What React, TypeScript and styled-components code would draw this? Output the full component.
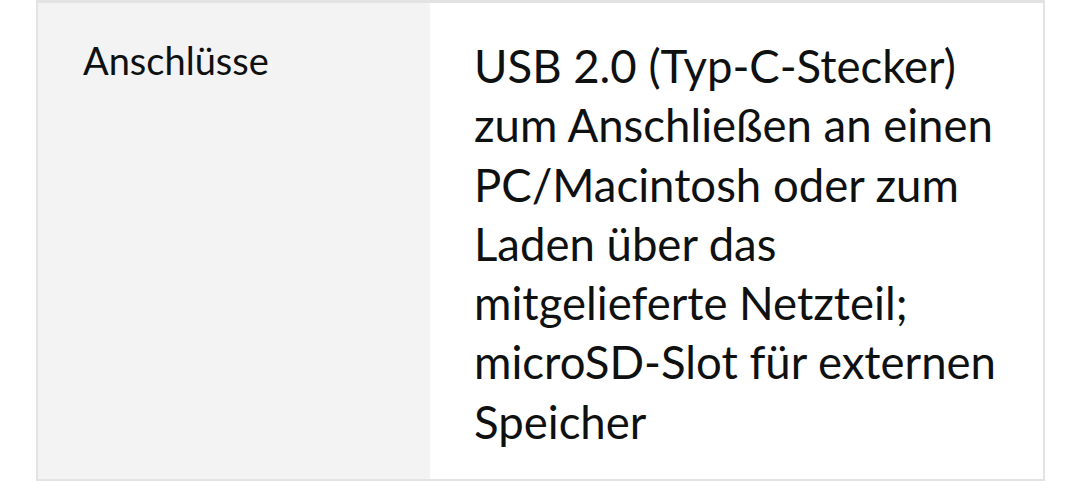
import React from "react";
import styled, { createGlobalStyle } from "styled-components";

const Global = createGlobalStyle`
  html, body { margin: 0; padding: 0; background: #ffffff; }
  body { font-family: "Lato", "Noto Sans", sans-serif; color: #0f1111; }
`;

const Page = styled.div`
  padding: 0 35px 0 36px;
  height: 481px;
  box-sizing: border-box;
`;

const Table = styled.div`
  display: grid;
  grid-template-columns: 392px 1fr;
  height: 481px;
  box-sizing: border-box;
  border: 2px solid #e3e3e3;
  border-top-width: 3px;
`;

const LabelCell = styled.div`
  background: #f3f3f3;
  padding: 33px 44px 0 45px;
  font-size: 38px;
  line-height: 49px;
`;

const ValueCell = styled.div`
  background: #ffffff;
  padding: 33px 24px 0 44px;
  font-size: 45.5px;
  line-height: 59.3px;
`;

export default function App() {
  return (
    <>
      <Global />
      <Page>
        <Table>
          <LabelCell>Anschlüsse</LabelCell>
          <ValueCell>
            USB 2.0 (Typ-C-Stecker) zum Anschließen an einen PC/Macintosh oder zum Laden über das
            mitgelieferte Netzteil; microSD-Slot für externen Speicher
          </ValueCell>
        </Table>
      </Page>
    </>
  );
}
